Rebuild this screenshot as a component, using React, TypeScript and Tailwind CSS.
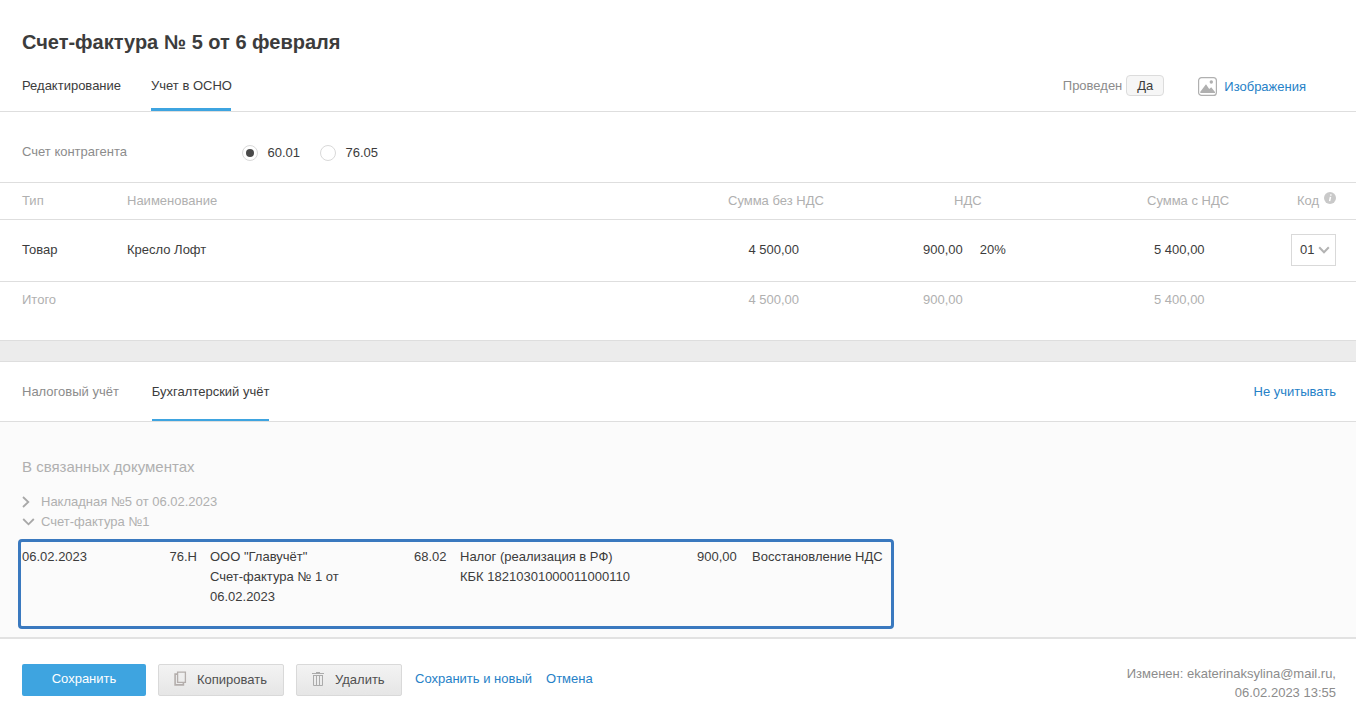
import { useState } from 'react';
import clsx from 'clsx';

const ROWS = [
  { type: 'Товар', name: 'Кресло Лофт', net: '4 500,00', vat: '900,00', rate: '20%', gross: '5 400,00', code: '01' },
];

const GRID = 'grid grid-cols-[105px_601px_195px_224px_144px_45px] px-[22px]';

function ImageIcon() {
  return (
    <svg width="19" height="19" viewBox="0 0 19 19" fill="none">
      <rect x="0.6" y="0.6" width="17.8" height="17.8" rx="3" stroke="#b0b0b0" strokeWidth="1.2" />
      <path d="M2.3 16V14.8L8 7.3L11.2 12L13.2 10.2L17 15V16Z" fill="#b0b0b0" />
      <circle cx="13.3" cy="5" r="1.7" fill="#b0b0b0" />
    </svg>
  );
}

function InfoIcon() {
  return (
    <svg className="mt-px" width="12" height="12" viewBox="0 0 12 12">
      <circle cx="6" cy="6" r="6" fill="#c9c9c9" />
      <path d="M6.5 4.8L5.6 9.2M7 2.4L6.7 3.7" stroke="#fff" strokeWidth="1.5" />
    </svg>
  );
}

function CopyIcon() {
  return (
    <svg className="-mt-[3px]" width="13" height="15" viewBox="0 0 13 15" fill="none" stroke="#b4aeac">
      <path d="M3.6 1.1H11.4V11.4H3.6Z" strokeWidth="1.3" />
      <path d="M3.2 3.1H1.1V13.9H9.4V12" strokeWidth="1.6" />
    </svg>
  );
}

function TrashIcon() {
  return (
    <svg className="-mt-[3px]" width="12" height="14" viewBox="0 0 12 14" fill="none" stroke="#ababab">
      <path d="M0 1.5H12M4 0.5H8" />
      <path d="M1.5 3V13.5H10.5V3M1 3.5H11" />
      <path d="M4.5 4V13M7.5 4V13" />
    </svg>
  );
}

function Radio({ label, checked, onChange }: { label: string; checked: boolean; onChange: () => void }) {
  return (
    <button onClick={onChange} className="flex items-start">
      <span className="mt-0.5 flex h-4 w-4 items-center justify-center rounded-full border border-[#d9d9d9] bg-white">
        {checked && <span className="h-2 w-2 rounded-full bg-[#4a4a4a]" />}
      </span>
      <span className="ml-[9.5px]">{label}</span>
    </button>
  );
}

export default function App() {
  const [account, setAccount] = useState('60.01');
  const [tab, setTab] = useState('Бухгалтерский учёт');

  return (
    <div className="flex h-[715px] w-[1356px] flex-col overflow-hidden bg-white font-['Liberation_Sans',Arial,sans-serif] text-[13px] leading-5 text-[#3c3c3c]">
      <header className="h-28 border-b border-[#dedede] px-[22px] pt-[29px]">
        <h1 className="text-xl leading-[26px] font-bold">Счет-фактура № 5 от 6 февраля</h1>
        <div className="mt-[21px] flex h-[35px]">
          <nav className="flex gap-[30px]">
            <a className="h-[35px]">Редактирование</a>
            <a className="h-[35px] w-20 border-b-3 border-[#3ea4e0] whitespace-nowrap">Учет в ОСНО</a>
          </nav>
          <div className="mr-7 ml-auto flex">
            <span className="text-[#8c8c8c]">Проведен</span>
            <span className="-mt-px ml-1 flex h-[21px] w-[38px] items-center justify-center rounded-[4px] border border-[#dcdcdc] bg-[#f6f6f6]">
              Да
            </span>
            <a className="ml-[34px] flex h-[21px] gap-[7px] pt-px text-[#2681c7]">
              <ImageIcon />
              <span>Изображения</span>
            </a>
          </div>
        </div>
      </header>

      <section className="flex h-[71px] border-b border-[#dedede] px-[22px] pt-[30px]">
        <span className="w-[220px] text-[#8c8c8c]">Счет контрагента</span>
        <div className="mt-px flex h-5 gap-5">
          {['60.01', '76.05'].map((value) => (
            <Radio key={value} label={value} checked={account === value} onChange={() => setAccount(value)} />
          ))}
        </div>
      </section>

      <section className="h-[157px]">
        <div className={clsx(GRID, 'h-[37px] border-b border-[#dedede] pt-2 text-[#b0b0b0]')}>
          <span>Тип</span>
          <span>Наименование</span>
          <span>Сумма без НДС</span>
          <span className="pl-[31px]">НДС</span>
          <span>Сумма с НДС</span>
          <span className="flex justify-between pl-1.5">
            Код <InfoIcon />
          </span>
        </div>
        {ROWS.map((row) => (
          <div key={row.name} className={clsx(GRID, 'h-[62px] items-center border-b border-[#dedede] pb-px')}>
            <span>{row.type}</span>
            <span>{row.name}</span>
            <span className="w-[71px] text-right">{row.net}</span>
            <span className="flex gap-[17px]">
              <span>{row.vat}</span>
              <span>{row.rate}</span>
            </span>
            <span className="pl-[7px]">{row.gross}</span>
            <button className="flex h-8 w-[45px] items-center justify-between border border-[#d9d9d9] pr-[5px] pl-2">
              {row.code}
              <svg width="12" height="8" viewBox="0 0 12 8" fill="none" stroke="#b3b3b3" strokeWidth="2">
                <path d="M1.2 1.2L6 6.2L10.8 1.2" />
              </svg>
            </button>
          </div>
        ))}
        <div className={clsx(GRID, 'h-[58px] pt-2 text-[#b0b0b0]')}>
          <span>Итого</span>
          <span />
          <span className="w-[71px] text-right">4 500,00</span>
          <span>900,00</span>
          <span className="pl-[7px]">5 400,00</span>
        </div>
      </section>

      <div className="h-[22px] border-y border-[#dedede] bg-[#ececec]" />

      <nav className="flex h-[60px] gap-[33px] border-b border-[#dedede] pt-5 pr-5 pl-[22px]">
        {['Налоговый учёт', 'Бухгалтерский учёт'].map((name) => (
          <button
            key={name}
            onClick={() => setTab(name)}
            className={clsx('flex h-[39px] items-start', tab === name ? 'border-b-2 border-[#3ea4e0]' : 'text-[#8c8c8c]')}
          >
            {name}
          </button>
        ))}
        <a className="ml-auto text-[#2681c7]">Не учитывать</a>
      </nav>

      <section className="h-[217px] border-b-2 border-[#e2e2e2] bg-[#fbfbfb] px-[18px] pt-[35px]">
        <h2 className="pl-1 text-[15px] leading-5 text-[#b0b0b0]">В связанных документах</h2>
        <div className="mt-[15px] pl-1 text-[#b0b0b0]">
          <div className="flex items-center">
            <span className="w-[19px]">
              <svg width="8" height="12" viewBox="0 0 8 12" fill="none" stroke="#a8a8a8" strokeWidth="1.8">
                <path d="M1 1L6.3 6L1 11" />
              </svg>
            </span>
            Накладная №5 от 06.02.2023
          </div>
          <div className="flex items-center">
            <span className="w-[19px]">
              <svg width="13" height="8" viewBox="0 0 13 8" fill="none" stroke="#a8a8a8" strokeWidth="1.8">
                <path d="M1.2 1L6.5 6.3L11.8 1" />
              </svg>
            </span>
            Счет-фактура №1
          </div>
        </div>
        <div className="mt-[7px] flex h-[90px] w-[876px] rounded-[4px] border-3 border-[#3a79bf] pt-[5px] pl-px">
          <span className="w-[147.5px]">06.02.2023</span>
          <span className="w-[40.5px]">76.Н</span>
          <span className="w-[140px]">
            ООО "Главучёт"
            <br />
            Счет-фактура № 1 от 06.02.2023
          </span>
          <span className="ml-16 w-[46px]">68.02</span>
          <span className="w-[237px]">
            Налог (реализация в РФ)
            <br />
            КБК 18210301000011000110
          </span>
          <span className="w-[55px]">900,00</span>
          <span className="whitespace-nowrap">Восстановление НДС</span>
        </div>
      </section>

      <footer className="flex pt-[25px] pr-5 pl-[22px]">
        <button className="h-8 w-[124px] rounded-[2px] bg-[#3ea4e0] pb-0.5 text-white">Сохранить</button>
        <button className="ml-3 flex h-8 w-[126px] items-center rounded-[2px] border border-[#d9d9d9] bg-linear-to-b from-[#f3f3f3] to-[#e6e6e6] pl-[15px] text-[#505050]">
          <CopyIcon />
          <span className="ml-2.5">Копировать</span>
        </button>
        <button className="ml-3 flex h-8 w-[106px] items-center rounded-[2px] border border-[#d9d9d9] bg-linear-to-b from-[#f3f3f3] to-[#e6e6e6] pl-[15px] text-[#505050]">
          <TrashIcon />
          <span className="ml-[11px]">Удалить</span>
        </button>
        <a className="mt-[5px] ml-[13px] text-[#2681c7]">Сохранить и новый</a>
        <a className="mt-[5px] ml-3.5 text-[#2681c7]">Отмена</a>
        <div className="ml-auto text-right leading-[19px] text-[#8c8c8c]">
          Изменен: ekaterinaksylina@mail.ru,
          <br />
          06.02.2023 13:55
        </div>
      </footer>
    </div>
  );
}
